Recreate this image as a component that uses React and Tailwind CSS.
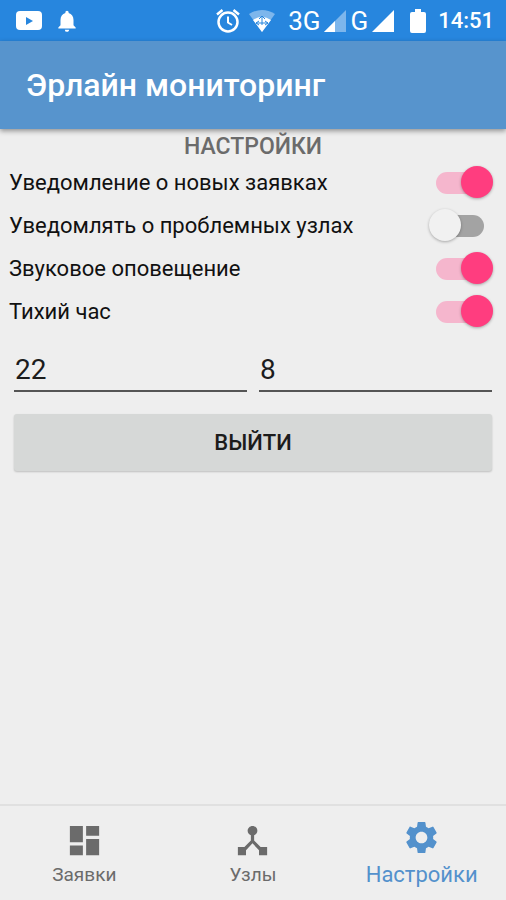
/**
 * SettingsScreen — экран настроек приложения мониторинга
 */
import { useState } from "react";
import { MdDashboard, MdDeviceHub, MdNotifications, MdSettings } from "react-icons/md";

const SWITCHES = [
  { key: "new_orders", label: "Уведомление о новых заявках", on: true },
  { key: "problem_nodes", label: "Уведомлять о проблемных узлах", on: false },
  { key: "sound", label: "Звуковое оповещение", on: true },
  { key: "quiet_hours", label: "Тихий час", on: true },
];

const TABS = [
  { key: "orders", label: "Заявки", Icon: MdDashboard },
  { key: "nodes", label: "Узлы", Icon: MdDeviceHub },
  { key: "settings", label: "Настройки", Icon: MdSettings },
];

function VideoIcon() {
  return (
    <svg width="26" height="20" viewBox="0 0 26 20">
      <rect width="26" height="19" rx="4" fill="#fff" />
      <path d="M10 6l7 4-7 4z" fill="#2786de" />
    </svg>
  );
}

function AlarmIcon() {
  return (
    <svg width="24" height="24" viewBox="0 0 24 24" fill="none" stroke="#fff">
      <circle cx="12" cy="13" r="9.5" strokeWidth="2.5" />
      <path d="M1 5.5l5.5-4.5M23 5.5l-5.5-4.5" strokeWidth="2.5" />
      <path d="M12 7.5v6l4 2.5" strokeWidth="2" />
    </svg>
  );
}

function WifiIcon() {
  return (
    <svg width="28" height="24" viewBox="0 0 28 24">
      <path d="M14 23L1 5Q14-3 27 5z" fill="#7db6ec" />
      <path d="M14 23L5 11q9-6 18 0z" fill="#fff" />
      <path d="M14 7v9M11 10l3-3 3 3M8 14h12M11 12l-3 2 3 2M17 12l3 2-3 2" fill="none" stroke="#2786de" strokeWidth="1" />
    </svg>
  );
}

function SignalIcon({ weak }) {
  return (
    <svg className="ml-1" width="22" height="22" viewBox="0 0 22 22">
      <path d="M0 22L22 0v22z" fill={weak ? "#7db6ec" : "#fff"} />
      {weak && <path d="M0 22L11 11v11z" fill="#fff" />}
    </svg>
  );
}

function BatteryIcon() {
  return (
    <svg width="16" height="24" viewBox="0 0 16 24">
      <path d="M5 0h6v3h3q2 0 2 2v17q0 2-2 2H2q-2 0-2-2V5q0-2 2-2h3z" fill="#fff" />
    </svg>
  );
}

function StatusBar() {
  return (
    <div className="flex h-[41px] items-center justify-between bg-[#2786de] pl-4 pr-3 text-white">
      <div className="flex items-center gap-3">
        <VideoIcon />
        <MdNotifications size={26} />
      </div>
      <div className="flex items-center">
        <AlarmIcon />
        <div className="ml-2 flex"><WifiIcon /></div>
        <span className="ml-3 text-[26px] leading-8">3G</span>
        <SignalIcon weak />
        <span className="ml-1 text-[26px] leading-8">G</span>
        <SignalIcon />
        <div className="ml-4 mr-3 flex"><BatteryIcon /></div>
        <span className="text-[22px] font-medium leading-8">14:51</span>
      </div>
    </div>
  );
}

function SwitchRow({ label, checked, onChange }) {
  return (
    <label className="flex h-[43px] items-center justify-between pl-[9px] pr-[13px] text-[22px] text-[#111]">
      <span>{label}</span>
      <input
        type="checkbox"
        role="switch"
        checked={checked}
        onChange={onChange}
        className="relative h-8 w-16 shrink-0 appearance-none before:absolute before:left-[7px] before:top-[5px] before:h-[22px] before:w-12 before:rounded-full before:bg-[#a3a3a3] after:absolute after:left-0 after:-top-px after:size-8 after:rounded-full after:bg-[#f1f1f1] after:shadow-[0_1px_3px_rgba(0,0,0,0.3)] checked:before:bg-[#f5b6cd] checked:after:left-8 checked:after:bg-[#ff3d7f]"
      />
    </label>
  );
}

export default function App() {
  const [switches, setSwitches] = useState(() => Object.fromEntries(SWITCHES.map((s) => [s.key, s.on])));
  const [hours, setHours] = useState({ from: "22", to: "8" });
  const [tab, setTab] = useState("settings");

  const toggle = (key) => setSwitches((prev) => ({ ...prev, [key]: !prev[key] }));

  return (
    <div className="flex min-h-screen flex-col bg-[#eeeeee] font-[Roboto,sans-serif]">
      <StatusBar />
      <header className="flex h-[88px] items-center bg-[#5794cd] px-[26px] shadow-[0_2px_5px_rgba(0,0,0,0.4)]">
        <h1 className="text-[32px] font-medium text-white">Эрлайн мониторинг</h1>
      </header>

      <main className="flex-1">
        <h2 className="pt-1 text-center text-[23px] font-medium leading-7 text-[#6b6b6b]">НАСТРОЙКИ</h2>
        {SWITCHES.map(({ key, label }) => (
          <SwitchRow key={key} label={label} checked={switches[key]} onChange={() => toggle(key)} />
        ))}

        {/* Границы тихого часа */}
        <div className="grid grid-cols-2 gap-3 px-[14px] pt-3">
          {["from", "to"].map((name) => (
            <input
              key={name}
              type="text"
              inputMode="numeric"
              aria-label={name === "from" ? "Начало тихого часа" : "Конец тихого часа"}
              value={hours[name]}
              onChange={(e) => setHours((prev) => ({ ...prev, [name]: e.target.value }))}
              className="h-[47px] w-full min-w-0 border-b-2 border-[#555] bg-transparent px-px pt-1 text-[28px] text-[#1c1c1c] outline-none"
            />
          ))}
        </div>

        <div className="px-[14px] pt-[22px]">
          <button
            type="button"
            className="h-[57px] w-full rounded-[3px] bg-[#d6d8d7] text-[22px] font-medium text-[#1c1c1c] shadow-[0_1px_2px_rgba(0,0,0,0.2)]"
          >
            ВЫЙТИ
          </button>
        </div>
      </main>

      <nav className="grid h-24 grid-cols-3 border-t-2 border-[#e0e0e0]">
        {TABS.map(({ key, label, Icon }) => {
          const active = tab === key;
          return (
            <button
              key={key}
              type="button"
              onClick={() => setTab(key)}
              className={`flex flex-col items-center ${active ? "pt-3 text-[22px] leading-9 text-[#5391cc]" : "pt-[15px] text-[19px] leading-[30px] text-[#6b6b6b]"}`}
            >
              <Icon size={39} />
              <span>{label}</span>
            </button>
          );
        })}
      </nav>
    </div>
  );
}
